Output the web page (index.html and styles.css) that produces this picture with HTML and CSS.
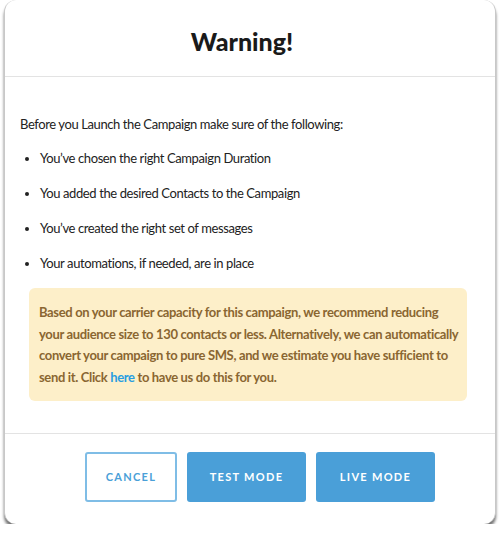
FILE: index.html
```html
<!DOCTYPE html>
<html lang="en">
<head>
    <meta charset="UTF-8">
    <meta name="viewport" content="width=device-width, initial-scale=1.0">
    <title>Warning</title>
    <link rel="stylesheet" href="styles.css">
</head>
<body>
    <div class="modal">
        <div class="modal-header">
            <h1>Warning!</h1>
        </div>
        <div class="modal-body">
            <p class="intro">Before you Launch the Campaign make sure of the following:</p>
            <ul class="checklist">
                <li>You’ve chosen the right Campaign Duration</li>
                <li>You added the desired Contacts to the Campaign</li>
                <li>You’ve created the right set of messages</li>
                <li>Your automations, if needed, are in place</li>
            </ul>
            <div class="alert">
                Based on your carrier capacity for this campaign, we recommend reducing
                your audience size to 130 contacts or less. Alternatively, we can automatically
                convert your campaign to pure SMS, and we estimate you have sufficient to
                send it. Click <a href="#">here</a> to have us do this for you.
            </div>
        </div>
        <div class="modal-footer">
            <button class="btn btn-outline">Cancel</button>
            <button class="btn btn-primary">Test Mode</button>
            <button class="btn btn-primary">Live Mode</button>
        </div>
    </div>
</body>
</html>
```

FILE: styles.css
```css
body {
    margin: 0;
    background: #fff;
    font-family: Lato, "Liberation Sans", sans-serif;
    color: #222;
}
.modal {
    margin: 0 4px;
    width: 492px;
    height: 524px;
    box-sizing: border-box;
    background: #fff;
    border-radius: 12px;
    border-left: 1px solid #c8c8c8;
    border-right: 1px solid #c8c8c8;
    box-shadow: 0 4px 3px rgba(0, 0, 0, 0.55);
}
.modal-header {
    height: 77px;
    border-bottom: 1px solid #e3e3e3;
    display: flex;
    align-items: center;
    justify-content: center;
    padding: 6px 16px 0 0;
    box-sizing: border-box;
}
.modal-header h1 {
    margin: 0;
    font-size: 25px;
    font-weight: 900;
    color: #1a1a1a;
}
.modal-body {
    padding: 37px 28px 32px 15px;
    border-bottom: 1px solid #e3e3e3;
    font-size: 13px;
    letter-spacing: -0.4px;
}
.intro {
    margin: 0;
    line-height: 20px;
}
.checklist {
    margin: 14px 0 0;
    padding-left: 20px;
}
.checklist li {
    line-height: 20px;
    margin-bottom: 15px;
}
.alert {
    margin-left: 9px;
    background: #fdefc9;
    border-radius: 6px;
    padding: 14px 8px 12px 10px;
    color: #8a6631;
    font-weight: bold;
    font-size: 13px;
    letter-spacing: -0.35px;
    line-height: 21.7px;
}
.alert a {
    color: #2a9ee0;
    text-decoration: none;
}
.modal-footer {
    display: flex;
    justify-content: center;
    gap: 10px;
    padding-top: 18px;
    padding-left: 20px;
}
.btn {
    height: 50px;
    border-radius: 3px;
    font-family: inherit;
    font-size: 11px;
    font-weight: bold;
    letter-spacing: 1.3px;
    text-transform: uppercase;
    cursor: pointer;
}
.btn-outline {
    width: 92px;
    background: #fff;
    border: 2px solid #7fbde6;
    color: #4a9fd8;
}
.btn-primary {
    width: 119px;
    background: #4a9fd8;
    border: none;
    color: #fff;
}
```
